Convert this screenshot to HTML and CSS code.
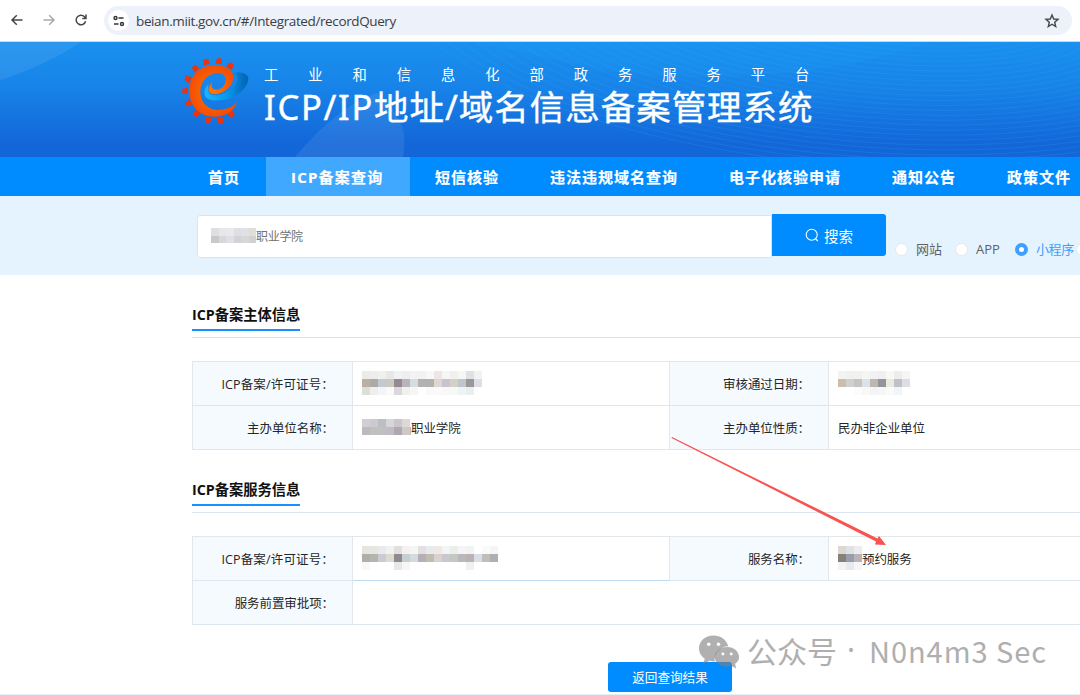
FILE: index.html
```html
<!DOCTYPE html>
<html lang="zh-CN">
<head>
<meta charset="utf-8">
<title>ICP/IP地址/域名信息备案管理系统</title>
<link rel="stylesheet" href="styles.css">
</head>
<body>
<div class="browser">
  <svg class="tool" viewBox="0 0 16 16"><path d="M13.500 8H3.200M7.800 3.300L3 8l4.800 4.700"/></svg>
  <svg class="tool off" viewBox="0 0 16 16"><path d="M2.500 8h10.300M8.200 3.300L13 8l-4.800 4.700"/></svg>
  <svg class="tool" viewBox="0 0 16 16"><path d="M12.600 9.200A4.800 4.800 0 1 1 11.500 4.700L13 6.200M13 2.500v3.900H9.300"/></svg>
  <div class="address">
    <span class="site"><svg viewBox="0 0 14 14"><path d="M6.500 4h5M2 10h4.500"/><circle cx="3.500" cy="4" r="1.500"/><circle cx="10" cy="10" r="1.500"/></svg></span>
    <span class="url">beian.miit.gov.cn/#/Integrated/recordQuery</span>
    <svg class="star" viewBox="0 0 16 16"><path d="M8 2l1.700 4 4.300.400-3.300 2.800 1 4.300L8 11.200l-3.700 2.300 1-4.300L2 6.400 6.300 6z"/></svg>
  </div>
</div>

<header class="banner">
  <svg class="banner-art" viewBox="0 0 1080 115">
    <path d="M0 0H81C58 15 30 29 0 38z" fill="#fff" opacity=".08"/>
    <path d="M295 115C317 89 345 62 377 51Q398 67 404 92Q405 105 403 115z" fill="#fff" opacity=".08"/>
    <path d="M470 0C550 13 590 33 680 35Q830 37 930 0z" fill="#20b0ff" opacity=".12"/>
    <g id="waves"></g>
  </svg>
  <svg class="logo" viewBox="0 0 216 222">
    <defs>
      <radialGradient id="orange"><stop offset="0" stop-color="#ff7800"/><stop offset="1" stop-color="#f44e04"/></radialGradient>
      <linearGradient id="blue" x1="0" x2="1"><stop offset="0" stop-color="#19b5ff"/><stop offset=".55" stop-color="#0795e9"/><stop offset="1" stop-color="#0460b0"/></linearGradient>
    </defs>
    <g id="teeth" fill="#e9340e"></g>
    <path fill="url(#blue)" d="M160 57C185 50 206 60 205 76C203 98 176 127 145 135C115 142 78 142 74 122C71 108 78 97 86 90C80 110 85 124 106 124C140 122 178 92 172 68Q168 59 160 57z"/>
    <path fill="url(#orange)" d="M172 144C160 175 132 188 103 188C58 188 28 155 28 111C28 66 58 34 103 34C140 34 162 50 160 72C157 98 130 120 104 121C84 121 78 104 97 84C91 100 98 109 112 107C130 104 138 88 137 75C135 60 120 55 105 58C79 63 61 85 61 114C61 143 80 166 112 168C135 168 158 160 172 144z"/>
  </svg>
  <div class="brand">
    <p class="platform">工业和信息化部政务服务平台</p>
    <h1><span class="latin">ICP/IP</span>地址/域名信息备案管理系统</h1>
  </div>
</header>

<nav class="menu">
  <a>首页</a><a class="current">ICP备案查询</a><a>短信核验</a><a>违法违规域名查询</a><a>电子化核验申请</a><a>通知公告</a><a>政策文件</a>
</nav>

<section class="search">
  <div class="field"><svg class="mosaic" data-rows="e0dedf e6e7ea e9e9ed dedfe4 e0e1e4 e1ddd9|c9c8ca d8d7db dfe0e3 d3d2d8 d9d7db d5d0d0" data-cell="7.500"></svg><span>职业学院</span></div>
  <button class="submit"><svg viewBox="0 0 14 14"><circle cx="6.700" cy="6.700" r="5.500"/><path d="M10.300 10.500l2.500 2.500"/></svg>搜索</button>
  <div class="radios">
    <i class="radio"></i><span class="opt">网站</span>
    <i class="radio"></i><span class="opt">APP</span>
    <i class="radio on"></i><span class="opt chosen">小程序</span>
    <i class="radio"></i>
  </div>
</section>

<main class="content">
  <section class="block">
    <div class="heading"><h2>ICP备案主体信息</h2></div>
    <div class="grid">
      <div class="label"><span class="wide">ICP备案/许可证号：</span></div>
      <div class="value"><svg class="mosaic" data-rows="ebebe9 ededed f0f0ed e8e7e9 f0f1f2 eeeeee f4f3f4 f2f2f2 f8f8f8 ece7e6 f6f6f5 f0f0ee f6f6f5 dfe2e3 f2f2f2|b9b0a1 acaaa4 c5c9ce cacac0 938a92 b7b4bb d3dee0 b3b0b7 b2b2b1 dfd6d1 c6c5ce d5cfc8 c0c5c9 9a9699 dcdde9|dbdeda f0efec f3f5fa fafafa dbd8dd f0f0ef f8f6f2 fff f9f9fa fbfafa f8f8f7 f7f8f8 eef3f3 e9eeee fff"></svg></div>
      <div class="label"><span>审核通过日期：</span></div>
      <div class="value"><svg class="mosaic" data-rows="f3f3f2 f1f1f1 f1f1ef f5f5f4 f2f2f3 f0f0f1 f8f8f5 ededeb f5f5f6|cebdaf ccd2cd c8c3bf dce2e8 bfb6b0 92959a eaeae1 bfc1c7 dcdee5|fff fff fcfcfc f8f8f6 f2f4f6 f5f6f6 fafbf9 f0f6f8 fff"></svg></div>
      <div class="label"><span>主办单位名称：</span></div>
      <div class="value"><svg class="mosaic" data-width="49" data-rows="d2ced1 cdcacf bdbec5 d6d5d9 cbc5ce ded9d7 fff|beb8c0 bec1bd bfc0c0 c0bbc4 aea8b0 ccc9c8 c5b8a9"></svg><span>职业学院</span></div>
      <div class="label"><span>主办单位性质：</span></div>
      <div class="value"><span>民办非企业单位</span></div>
    </div>
  </section>
  <section class="block second">
    <div class="heading"><h2>ICP备案服务信息</h2></div>
    <div class="grid">
      <div class="label"><span class="wide">ICP备案/许可证号：</span></div>
      <div class="value strong"><svg class="mosaic" data-rows="e5e6df e7e7e1 e9eaec f1f1ef e2dfdf f5f1f2 f5f5f2 e4dfe3 e9eaeb eee9e4 f4f4f4 ebeeeb f5f4f6 eff4f4 fff fafafa f5f5f5|afafaa b5b4ae cbccd1 dbdbd1 92898f c5ced3 d2dcdc b5afb8 c2bbb0 d9d3d0 cac8cf c2c9c3 bbb8bd bab2b3 d9dde6 c1beb6 abb0b3|f8f8f8 fff fff fff e9e7ea f6f6f5 fff fff fff fff fff fff fff f0f0f0 fff fff fff"></svg></div>
      <div class="label"><span>服务名称：</span></div>
      <div class="value"><svg class="mosaic" data-rows="dad8d1 dee1e5 ececec|858179 9a9cab b9b2b8|f3f3f3 e8e9ed f6f6f7"></svg><span>预约服务</span></div>
      <div class="label"><span>服务前置审批项：</span></div>
      <div class="value all"></div>
    </div>
  </section>
  <button class="back">返回查询结果</button>
</main>

<svg class="arrow" viewBox="0 0 216 111"><path d="M.5 1L1 0 206.500 101.500 208 99 215 108 204 107.500 205 104.500z"/></svg>

<div class="watermark">
  <svg viewBox="0 0 42 34">
    <path d="M15 0C6 0 0 6 0 13c0 5 2 8 6 11l-2 5 7-3 5 1C15 18 22 11 30 11 28 4 22 0 15 0z"/>
    <path d="M29 12c-8 0-13 5-13 10s5 10 13 10l4-1 5 3-1-5c3-2 4-4 4-7 0-5-5-10-12-10z"/>
    <g class="eyes"><circle cx="10" cy="9" r="1.800"/><circle cx="20" cy="9" r="1.800"/><circle cx="24.500" cy="19" r="1.500"/><circle cx="33" cy="19" r="1.500"/></g>
  </svg>
  <span class="account">公众号</span><span class="dot">·</span><span class="name">N0n4m3 Sec</span>
</div>
<script src="script.js"></script>
</body>
</html>
```
FILE: styles.css
```css
* { box-sizing: border-box; }
html { overflow: hidden; }
body {
  margin: 0; width: 1080px; height: 695px; overflow: hidden; position: relative;
  background: #fff; color: #303133;
  font-family: "Open Sans", "Noto Sans CJK SC", sans-serif;
}
svg { display: block; flex: none; }
h1, h2, p { margin: 0; }
button { border: 0; padding: 0; font: inherit; color: #fff; background: #008cff; }

.browser { height: 42px; display: flex; align-items: flex-start; padding: 6px 8px 6px 9px; border-bottom: 1px solid #c3d9ee; }
.tool { width: 16px; height: 16px; margin: 6px 16px 0 0; fill: none; stroke: #45474b; stroke-width: 1.5; }
.tool.off { stroke: #aaa; }
.address { flex: 1; height: 29px; margin-left: -1px; display: flex; align-items: center; background: #edf1fa; border-radius: 15px; padding: 0 12px 0 4px; }
.site { width: 21px; height: 21px; border-radius: 50%; background: #fff; display: flex; align-items: center; justify-content: center; }
.site svg { width: 14px; height: 14px; fill: none; stroke: #333; stroke-width: 1.4; }
.url { flex: 1; margin-left: 7px; font-size: 13.5px; line-height: 20px; letter-spacing: -.38px; color: #3b3d42; }
.star { width: 16px; height: 16px; fill: none; stroke: #45474b; stroke-width: 1.4; }

.banner { height: 115px; position: relative; display: flex; background: linear-gradient(#1a90ef, #1783e8 40%, #1366d8 90%); padding-left: 180px; }
.banner-art { position: absolute; inset: 0; width: 1080px; height: 115px; }
#waves { fill: none; stroke: #38b7ff; stroke-width: 1; opacity: .15; }
.logo { position: relative; width: 72px; height: 74px; margin-top: 12px; }
.brand { position: relative; color: #fff; padding-left: 12px; white-space: nowrap; }
.platform { margin-top: 22px; height: 21px; line-height: 21px; font-size: 14.3px; letter-spacing: 29.95px; }
h1 { font-size: 34.5px; line-height: 44px; letter-spacing: .98px; font-weight: 400; -webkit-text-stroke: .4px #fff; font-family: "Noto Sans", "Noto Sans CJK SC", sans-serif; }
.latin { letter-spacing: 1.700px; }

.menu { height: 39px; display: flex; background: #008cff; padding-left: 182.5px; overflow: hidden; }
.menu a { flex: none; padding: 0 25.5px; line-height: 40px; font-size: 15px; font-weight: 700; letter-spacing: 1px; color: #fff; white-space: nowrap; -webkit-text-stroke: .2px #fff; }
.menu .current { background: #40a9ff; width: 144px; letter-spacing: 1.200px; }

.search { height: 79px; display: flex; align-items: flex-start; background: #e5f3ff; padding: 18px 0 0 197px; overflow: hidden; }
.field { flex: none; width: 575px; height: 43px; margin-top: 1px; display: flex; align-items: center; background: #fff; border: 1px solid #e0e4ea; border-radius: 3px 0 0 3px; padding: 0 0 2px 13px; font-size: 12px; letter-spacing: -.3px; color: #737373; }
.submit { flex: none; width: 114px; height: 42px; display: flex; align-items: center; justify-content: center; gap: 5px; border-radius: 0 3px 3px 0; font-size: 14.500px; }
.submit svg { width: 14px; height: 14px; fill: none; stroke: #fff; stroke-width: 1.1; }
.radios { flex: none; display: flex; align-items: center; height: 20px; margin: 25px 0 0 9px; }
.radio { flex: none; width: 13px; height: 13px; border: 1px solid #e5e7eb; border-radius: 50%; background: #fff; }
.radio.on { border: 4.500px solid #409eff; }
.opt { flex: none; width: 39px; margin-left: 8px; font-size: 13px; line-height: 20px; color: #606266; white-space: nowrap; }
.opt.chosen { width: 40px; color: #409eff; letter-spacing: -.4px; }

.content { height: 420px; padding-left: 192px; overflow: hidden; border-bottom: 1px solid #e3f2f8; }
.block { padding-top: 28px; }
.heading { height: 35px; border-bottom: 1px solid #d9e6f2; }
h2 { display: inline-block; height: 28px; border-bottom: 2px solid #1890ff; font-size: 14.300px; line-height: 24px; letter-spacing: -.05px; color: #111; white-space: nowrap; }
.grid { width: 1000px; margin-top: 23px; display: grid; grid-template-columns: 160px 317px 159px 363px; grid-template-rows: 44px 44px; border-top: 1px solid #e2e7ec; border-left: 1px solid #e2e7ec; }
.label, .value { display: flex; align-items: center; padding-bottom: 1px; border-right: 1px solid #e2e7ec; border-bottom: 1px solid #dce7f0; font-size: 12.500px; letter-spacing: -.08px; white-space: nowrap; color: #262626; }
.label { justify-content: flex-end; background: #f5faff; padding-right: 18px; }
.wide { letter-spacing: .15px; }
.value { padding-left: 9px; }
.value.strong { border-bottom-color: #bddcf3; }
.all { grid-column: 2 / 5; }
.back { display: block; width: 124px; height: 30px; margin: 37px 0 0 416px; border-radius: 3px; font-size: 12.600px; line-height: 29px; }

.arrow { position: absolute; left: 671px; top: 437px; width: 216px; height: 111px; fill: #fa5151; }
.watermark { position: absolute; left: 699px; top: 628px; height: 44px; display: flex; align-items: center; color: #afafaf; font-family: "Noto Sans CJK SC", sans-serif; font-size: 30px; line-height: 44px; white-space: nowrap; }
.watermark svg { width: 41px; height: 34px; margin-top: 4px; fill: #7f7f7f; fill-opacity: .62; }
.watermark .eyes { fill: #fff; fill-opacity: 1; }
.account { margin-left: 7px; }
.dot { width: 28px; text-align: center; font-family: "Noto Sans", sans-serif; }
.name { margin-left: 4px; font-size: 29px; letter-spacing: .950px; }
```
FILE: script.js
```js
const NS = "http://www.w3.org/2000/svg";
function add(parent, tag, attrs) {
  const el = document.createElementNS(NS, tag);
  for (const k in attrs) el.setAttribute(k, attrs[k]);
  parent.appendChild(el);
}

// Pixelated blocks that cover private values.
document.querySelectorAll(".mosaic").forEach(svg => {
  const cell = Number(svg.dataset.cell || 8);
  const rows = svg.dataset.rows.split("|").map(r => r.split(" "));
  svg.setAttribute("width", svg.dataset.width || rows[0].length * cell);
  svg.setAttribute("height", rows.length * cell);
  svg.setAttribute("shape-rendering", "crispEdges");
  rows.forEach((r, y) => r.forEach((c, x) =>
    add(svg, "rect", { x: x * cell, y: y * cell, width: cell, height: cell, fill: "#" + c })));
});

// Gear teeth around the logo.
const teeth = document.getElementById("teeth");
[[151,36],[117,22],[79,24],[46,43],[24,75],[16,111],[26,148],[49,179],[84,198],[121,199],[153,180]].forEach(([x, y]) => {
  const a = Math.atan2(y - 111, x - 100) * 180 / Math.PI + 90;
  add(teeth, "path", { d: "M-7-9H7L10 8H-10z", transform: `translate(${x} ${y}) rotate(${a})` });
});

// Fine contour lines in the banner.
const waves = document.getElementById("waves");
for (let i = 0; i < 30; i++) {
  add(waves, "ellipse", { cx: 890 - i * 1.5, cy: -30, rx: 110 + i * 12, ry: 12 + i * 5, transform: "rotate(5 890 0)" });
}
```
